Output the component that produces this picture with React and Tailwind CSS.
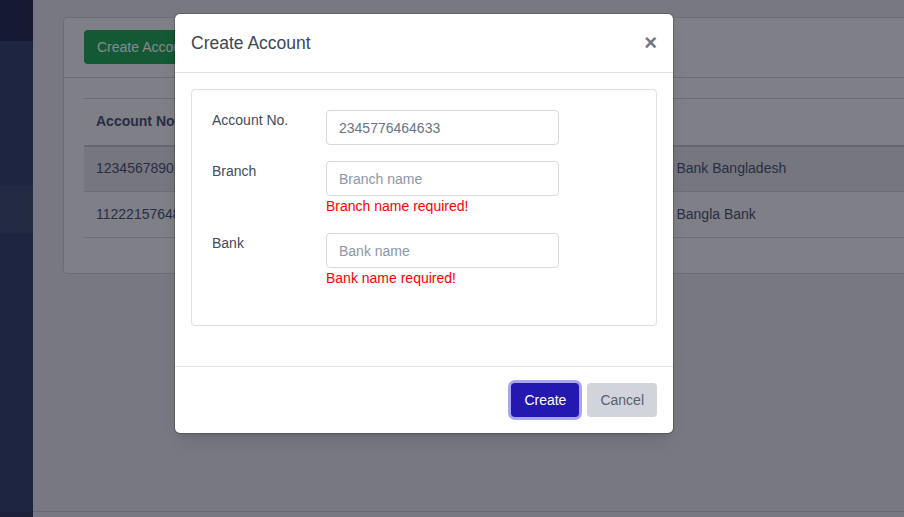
import { useState } from 'react';

const ROWS = [
  { no: '12345678901', name: 'Rahim Uddin', branch: 'Motijheel', bank: 'Islami Bank Bangladesh' },
  { no: '11222157648', name: 'Karim Ahmed', branch: 'Gulshan', bank: 'Dutch Bangla Bank' },
];

function Field({ label, placeholder, value, error, gap }) {
  return (
    <div className={`flex ${gap}`}>
      <label className="w-[114px] shrink-0 leading-5 text-[14px] text-[#3f4a5c]">{label}</label>
      <div>
        <input
          defaultValue={value}
          placeholder={placeholder}
          className="block w-[233px] h-[35px] rounded-[4px] border border-[#d6d9de] px-3 text-[14px] text-[#6b7385] placeholder:text-[#8d96a7] outline-none"
        />
        {error && <p className="leading-5 text-[14px] text-[#ff0000]">{error}</p>}
      </div>
    </div>
  );
}

export default function App() {
  const [open] = useState(true);

  return (
    <div className="relative w-[904px] h-[517px] overflow-hidden font-['Liberation_Sans',Arial,sans-serif]">
      {/* page underneath */}
      <div className="flex h-full">
        <aside className="w-[33px] shrink-0 flex flex-col bg-[#2d3b62]">
          <div className="h-[41px] bg-[#1b2542]" />
          <div className="h-[144px]" />
          <div className="h-[48px] bg-[#354566]" />
          <div className="flex-1" />
          <div className="h-[5px] bg-[#233050]" />
        </aside>
        <main className="flex-1 flex flex-col bg-[#e1e1e6] overflow-hidden">
          <div className="flex-1 pt-[17px] pl-[30px]">
            <div className="w-[880px] h-[257px] rounded-[4px] border border-[#c9c9ce] bg-[#efeff0] overflow-hidden">
              <div className="px-5 pt-3 pb-[13px] border-b border-[#c3c3c8]">
                <button className="h-[34px] px-[13px] rounded-[4px] bg-[#16a34a] text-white text-[14px]">
                  Create Account
                </button>
              </div>
              <div className="px-5 pt-5">
                <table className="table-fixed w-[860px] text-left text-[14px] text-[#404b6b] border-collapse">
                  <colgroup>
                    <col className="w-[180px]" />
                    <col className="w-[180px]" />
                    <col className="w-[180px]" />
                    <col />
                  </colgroup>
                  <thead>
                    <tr className="h-[47px] border-t border-[#c3c3c8] border-b-2 border-b-[#bdbdc3]">
                      <th className="px-3 font-bold">Account No</th>
                      <th className="px-3 font-bold">Name</th>
                      <th className="px-3 font-bold">Branch</th>
                      <th className="px-3 font-bold">Bank</th>
                    </tr>
                  </thead>
                  <tbody>
                    {ROWS.map((r, i) => (
                      <tr key={r.no} className={`h-[46px] border-b border-[#c9c9ce] ${i === 0 ? 'bg-[#dddde0]' : ''}`}>
                        <td className="px-3">{r.no}</td>
                        <td className="px-3">{r.name}</td>
                        <td className="px-3">{r.branch}</td>
                        <td className="px-3">{r.bank}</td>
                      </tr>
                    ))}
                  </tbody>
                </table>
              </div>
            </div>
          </div>
          <div className="h-[6px] border-t border-[#c3c3cc]" />
        </main>
      </div>

      {open && (
        <>
          {/* backdrop */}
          <div className="absolute inset-0 bg-[#0f0f1e]/50" />

          {/* modal */}
          <div className="absolute left-[175px] top-[14px] w-[498px] rounded-[5px] bg-white shadow-lg ring-1 ring-black/20">
            <div className="h-[59px] px-4 flex items-center justify-between border-b border-[#dee2e6]">
              <h2 className="text-[17.5px] text-[#3b4656]">Create Account</h2>
              <button className="text-[22px] leading-none font-bold text-[#707784]">×</button>
            </div>

            <div className="px-4 pt-4 pb-10">
              <div className="rounded-[4px] border border-[#dcdfe4] px-5 pt-5 pb-[37px]">
                <Field label="Account No." value="2345776464633" gap="mb-4" />
                <Field label="Branch" placeholder="Branch name" error="Branch name required!" gap="mb-[17px]" />
                <Field label="Bank" placeholder="Bank name" error="Bank name required!" gap="" />
              </div>
            </div>

            <div className="px-4 pt-4 pb-4 flex justify-end gap-2 border-t border-[#dee2e6]">
              <button className="h-[34px] px-[13px] rounded-[4px] bg-[#2318b0] text-white text-[14px] ring-[3px] ring-[#a9a4ef]">
                Create
              </button>
              <button className="h-[34px] px-[13px] rounded-[4px] bg-[#d1d5db] text-[#56606e] text-[14px]">
                Cancel
              </button>
            </div>
          </div>
        </>
      )}
    </div>
  );
}
